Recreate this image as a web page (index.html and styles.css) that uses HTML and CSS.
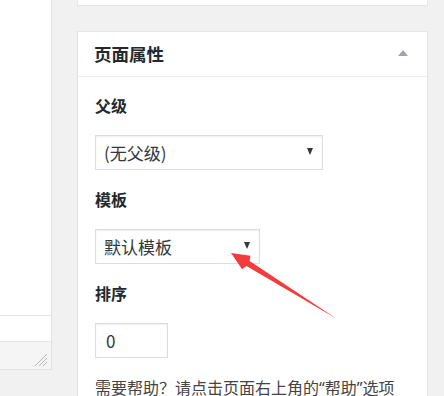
FILE: index.html
```html
<!DOCTYPE html>
<html lang="zh-CN">
<head>
<meta charset="utf-8">
<link rel="stylesheet" href="styles.css">
</head>
<body>
<div class="page">
  <div class="editor">
    <div class="editor-body"></div>
    <div class="editor-row"></div>
    <div class="editor-foot">
      <svg class="grip" width="14" height="14" viewBox="0 0 14 14">
        <path d="M13 1 L1 13 M13 5 L5 13 M13 9 L9 13" stroke="#b4b9be" stroke-width="1" fill="none"/>
      </svg>
    </div>
  </div>
  <div class="side">
    <div class="box-top"></div>
    <div class="postbox">
      <div class="postbox-head">
        <h2 class="postbox-title">页面属性</h2>
        <span class="toggle"></span>
      </div>
      <div class="postbox-inside">
        <p class="label">父级</p>
        <div class="select select-wide"><span>(无父级)</span><i class="caret"></i></div>
        <p class="label">模板</p>
        <div class="select select-mid"><span>默认模板</span><i class="caret"></i></div>
        <p class="label">排序</p>
        <div class="input">0</div>
        <p class="help">需要帮助？请点击页面右上角的“帮助”选项</p>
      </div>
    </div>
  </div>
  <svg class="annot" width="444" height="396" viewBox="0 0 444 396">
    <polygon points="231,253 250.5,255.7 249.6,261 337,319 246.4,266 242.1,269.3" fill="#f53b3b"/>
  </svg>
</div>
</body>
</html>
```
FILE: styles.css
```css
html, body {
  margin: 0;
  padding: 0;
}
body {
  background: #f1f1f1;
  font-family: "Noto Sans CJK SC", "Noto Sans", sans-serif;
  color: #23282d;
  width: 444px;
  height: 396px;
  overflow: hidden;
}
.page {
  position: relative;
  display: flex;
  align-items: flex-start;
  width: 444px;
  height: 396px;
}
.editor {
  width: 51px;
  border-right: 1px solid #e2e2e2;
  display: flex;
  flex-direction: column;
}
.editor-body {
  height: 315px;
  background: #fff;
  border-bottom: 1px solid #e5e5e5;
}
.editor-row {
  height: 25px;
  background: #fff;
  border-bottom: 1px solid #e5e5e5;
}
.editor-foot {
  box-sizing: border-box;
  height: 28px;
  background: #f5f5f5;
  border-bottom: 1px solid #e2e2e2;
  display: flex;
  justify-content: flex-end;
  align-items: flex-end;
  padding: 0 3px 2px 0;
}
.grip {
  display: block;
}
.side {
  margin-left: 25px;
  width: 351px;
  display: flex;
  flex-direction: column;
  gap: 25px;
}
.box-top {
  height: 5px;
  background: #fff;
  border: 1px solid #e5e5e5;
  border-top: 0;
}
.postbox {
  background: #fff;
  border: 1px solid #e5e5e5;
  box-shadow: 0 1px 1px rgba(0,0,0,.04);
}
.postbox-head {
  height: 44px;
  border-bottom: 1px solid #eee;
  display: flex;
  align-items: center;
  justify-content: space-between;
  padding: 0 19px 0 16px;
}
.postbox-title {
  margin: 0;
  font-size: 17.5px;
  font-weight: 700;
  line-height: 1;
  color: #23282d;
}
.toggle {
  width: 0;
  height: 0;
  border-left: 5px solid transparent;
  border-right: 5px solid transparent;
  border-bottom: 6px solid #a0a5aa;
  margin-top: -2px;
}
.postbox-inside {
  padding: 16px 16px 0 17px;
}
.label {
  margin: 0;
  font-size: 16px;
  font-weight: 700;
  line-height: 24px;
  color: #23282d;
}
.select, .input {
  box-sizing: border-box;
  height: 35px;
  border: 1px solid #ddd;
  box-shadow: inset 0 1px 2px rgba(0,0,0,.07);
  background: #fff;
  display: flex;
  align-items: center;
  justify-content: space-between;
  padding: 0 9px 0 8px;
  font-size: 17px;
  color: #32373c;
  margin: 18px 0 17px;
}
.select-wide {
  width: 228px;
}
.select-mid {
  width: 165px;
}
.caret {
  width: 0;
  height: 0;
  border-left: 3.5px solid transparent;
  border-right: 3.5px solid transparent;
  border-top: 7px solid #32373c;
  margin-top: -2px;
}
.input {
  width: 73px;
  justify-content: flex-start;
  padding-left: 10px;
  margin-bottom: 18px;
}
.help {
  margin: 0;
  font-family: "Noto Sans", "Noto Sans CJK SC", sans-serif;
  font-size: 16px;
  line-height: 24px;
  color: #444;
  white-space: nowrap;
}
.annot {
  position: absolute;
  left: 0;
  top: 0;
  pointer-events: none;
}
```
